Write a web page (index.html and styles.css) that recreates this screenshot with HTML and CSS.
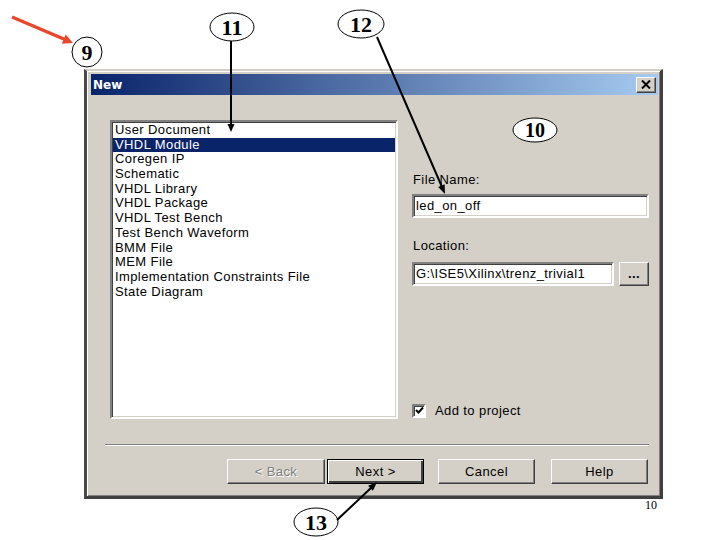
FILE: index.html
```html
<!DOCTYPE html>
<html lang="en">
<head>
    <meta charset="UTF-8">
    <meta name="viewport" content="width=device-width, initial-scale=1.0">
    <title>New</title>
    <link rel="stylesheet" href="styles.css">
</head>
<body>
    <div class="page">
        <!-- Janela "New" -->
        <div class="dialog">
            <div class="titlebar">
                <span class="title">New</span>
                <span class="close-btn">
                    <svg width="10" height="9" viewBox="0 0 10 9">
                        <path d="M1 0.5 L9 8.5 M9 0.5 L1 8.5" stroke="#000" stroke-width="2"/>
                    </svg>
                </span>
            </div>

            <div class="main">
                <!-- Tipos de arquivo -->
                <ul class="listbox">
                    <li>User Document</li>
                    <li class="selected">VHDL Module</li>
                    <li>Coregen IP</li>
                    <li>Schematic</li>
                    <li>VHDL Library</li>
                    <li>VHDL Package</li>
                    <li>VHDL Test Bench</li>
                    <li>Test Bench Waveform</li>
                    <li>BMM File</li>
                    <li>MEM File</li>
                    <li>Implementation Constraints File</li>
                    <li>State Diagram</li>
                </ul>

                <!-- Nome e local -->
                <div class="side">
                    <div class="field-label label-name">File Name:</div>
                    <div class="textbox">led_on_off</div>
                    <div class="field-label label-location">Location:</div>
                    <div class="location-row">
                        <div class="textbox location">G:\ISE5\Xilinx\trenz_trivial1</div>
                        <button class="btn browse">...</button>
                    </div>
                    <div class="check-row">
                        <span class="checkbox">
                            <svg width="9" height="9" viewBox="0 0 9 9">
                                <path d="M1 4 L3.5 6.5 L8 1.5" stroke="#000" stroke-width="2" fill="none"/>
                            </svg>
                        </span>
                        <span>Add to project</span>
                    </div>
                </div>
            </div>

            <div class="separator"></div>

            <div class="buttons">
                <button class="btn back" disabled>&lt; Back</button>
                <button class="btn next">Next &gt;</button>
                <button class="btn cancel">Cancel</button>
                <button class="btn help">Help</button>
            </div>
        </div>

        <!-- Marcações numeradas sobre a captura -->
        <svg class="callouts" width="720" height="540" viewBox="0 0 720 540">
            <line x1="12" y1="17" x2="65" y2="39.5" stroke="#e8472b" stroke-width="3.5"/>
            <polygon points="73,43 61.8,43.7 65.7,34.5" fill="#e8472b"/>

            <ellipse cx="87" cy="52" rx="15" ry="15" class="bubble"/>
            <text x="87" y="60" class="num">9</text>

            <ellipse cx="232" cy="27" rx="22" ry="14" class="bubble"/>
            <text x="232" y="35" class="num">11</text>
            <line x1="231" y1="41" x2="231" y2="126" class="pointer"/>
            <polygon points="231,132 227.5,124 234.5,124" fill="#000"/>

            <ellipse cx="361" cy="24" rx="23" ry="14" class="bubble"/>
            <text x="361" y="32" class="num">12</text>
            <line x1="377" y1="37" x2="442" y2="187" class="pointer"/>
            <polygon points="445,194 438.2,187.1 444.6,184.3" fill="#000"/>

            <ellipse cx="535" cy="130" rx="22" ry="12" class="bubble"/>
            <text x="535" y="137" class="num small">10</text>

            <ellipse cx="316" cy="522" rx="22" ry="14" class="bubble"/>
            <text x="316" y="530" class="num">13</text>
            <line x1="337" y1="520" x2="372" y2="487" class="pointer"/>
            <polygon points="377,482 372.9,490.7 368.1,485.7" fill="#000"/>

            <text x="651" y="509" class="page-num">10</text>
        </svg>
    </div>
</body>
</html>
```

FILE: styles.css
```css
/* Reset basico */
* {
    margin: 0;
    padding: 0;
    box-sizing: border-box;
}

body {
    background: #fff;
    font-family: "Liberation Sans", Arial, sans-serif;
    font-size: 13px;
    color: #000;
}

.page {
    position: relative;
    width: 720px;
    height: 540px;
    padding: 69px 0 0 84px;
}

/* Janela */
.dialog {
    width: 579px;
    height: 430px;
    background: #d4d0c8;
    letter-spacing: 0.4px;
    border-style: solid;
    border-width: 2px 3px 3px 3px;
    border-color: #d4d0c8 #404040 #404040 #4a4a4a;
    box-shadow: inset 1px 1px 0 #fff, inset -1px -1px 0 #808080;
    padding: 3px 2px 0 4px;
}

.titlebar {
    height: 21px;
    display: flex;
    align-items: center;
    justify-content: space-between;
    padding: 0 2px 0 2px;
    background: linear-gradient(to right, #0a246a, #a6caf0);
}

.title {
    font-family: "DejaVu Sans", sans-serif;
    font-weight: bold;
    font-size: 12px;
    letter-spacing: 0;
    color: #fff;
}

.close-btn {
    width: 20px;
    height: 16px;
    display: flex;
    align-items: center;
    justify-content: center;
    background: #d4d0c8;
    border: 1px solid;
    border-color: #fff #404040 #404040 #fff;
    box-shadow: inset -1px -1px 0 #808080;
}

.main {
    display: flex;
    gap: 14px;
    margin: 25px 0 0 19px;
}

/* Lista de tipos */
.listbox {
    list-style: none;
    width: 288px;
    height: 299px;
    background: #fff;
    border: 2px solid;
    border-color: #808080 #fff #fff #808080;
    box-shadow: inset 1px 1px 0 #404040, inset -1px -1px 0 #d4d0c8;
    padding: 1px 1px 0 1px;
}

.listbox li {
    height: 14.7px;
    line-height: 14.7px;
    padding-left: 2px;
    white-space: nowrap;
}

.listbox li.selected {
    background: #0a246a;
    color: #fff;
}

/* Coluna da direita */
.side {
    width: 237px;
    height: 299px;
    display: flex;
    flex-direction: column;
}

.field-label {
    line-height: 16px;
    height: 16px;
    padding-left: 1px;
}

.label-name {
    margin-top: 52px;
    margin-bottom: 6px;
}

.label-location {
    margin-top: 20px;
    margin-bottom: 8px;
}

.textbox {
    height: 24px;
    line-height: 20px;
    background: #fff;
    border: 2px solid;
    border-color: #808080 #fff #fff #808080;
    box-shadow: inset 1px 1px 0 #404040, inset -1px -1px 0 #d4d0c8;
    padding-left: 2px;
    white-space: nowrap;
    overflow: hidden;
}

.location-row {
    display: flex;
    gap: 5px;
}

.location {
    width: 203px;
}

.check-row {
    margin-top: auto;
    margin-bottom: 1px;
    display: flex;
    align-items: center;
    gap: 9px;
}

.checkbox {
    width: 14px;
    height: 14px;
    display: flex;
    align-items: center;
    justify-content: center;
    background: #fff;
    border: 2px solid;
    border-color: #808080 #fff #fff #808080;
    box-shadow: inset 1px 1px 0 #404040;
}

.separator {
    margin: 25px 9px 0 14px;
    height: 2px;
    border-top: 1px solid #808080;
    border-bottom: 1px solid #fff;
}

/* Botoes */
.buttons {
    display: flex;
    margin-top: 13px;
    padding-left: 136px;
}

.btn {
    width: 97px;
    height: 25px;
    font-family: "Liberation Sans", Arial, sans-serif;
    font-size: 13px;
    letter-spacing: 0.4px;
    color: #000;
    background: #d4d0c8;
    border: 1px solid;
    border-color: #fff #404040 #404040 #fff;
    box-shadow: inset -1px -1px 0 #808080;
}

.btn.back {
    width: 98px;
    color: #808080;
    text-shadow: 1px 1px 0 #fff;
}

.btn.next {
    margin-left: 2px;
    border: 1px solid #000;
    box-shadow: inset 1px 1px 0 #fff, inset -2px -2px 0 #404040;
}

.btn.cancel {
    margin-left: 14px;
}

.btn.help {
    margin-left: 16px;
}

.btn.browse {
    width: 30px;
    height: 24px;
    line-height: 14px;
    font-weight: bold;
}

/* Marcacoes */
.callouts {
    position: absolute;
    top: 0;
    left: 0;
    pointer-events: none;
}

.bubble {
    fill: #fff;
    stroke: #000;
    stroke-width: 1;
}

.pointer {
    stroke: #000;
    stroke-width: 2;
}

.num {
    font-family: "Liberation Serif", "Times New Roman", serif;
    font-weight: bold;
    font-size: 22px;
    text-anchor: middle;
}

.num.small {
    font-size: 20px;
}

.page-num {
    font-family: "Liberation Serif", "Times New Roman", serif;
    font-size: 12px;
    text-anchor: middle;
    fill: #000;
}
```
